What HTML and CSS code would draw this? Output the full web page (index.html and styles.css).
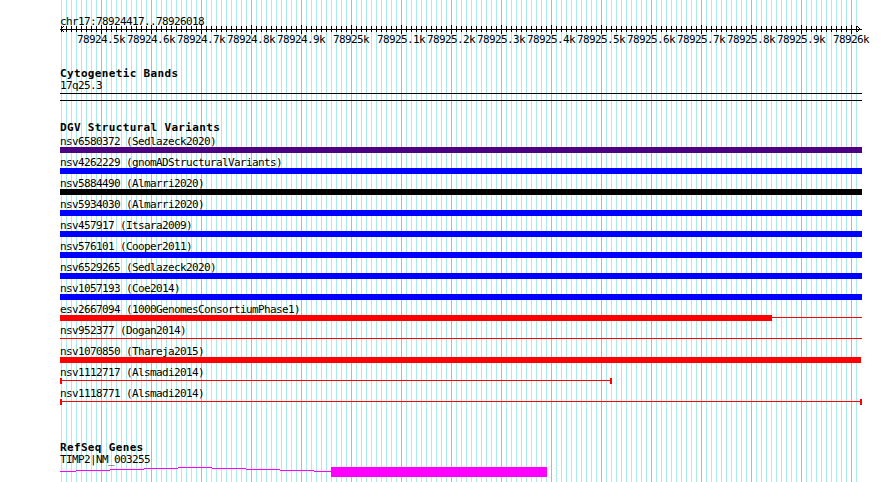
FILE: index.html
```html
<!DOCTYPE html>
<html>
<head>
    <meta charset="utf-8">
    <title>chr17:78924417..78926018</title>
    <link rel="stylesheet" href="styles.css">
</head>
<body>

<div class="browser">

    <div class="ruler">
        <div class="pos">chr17:78924417..78926018</div>
        <svg class="axis" width="802" height="18" shape-rendering="crispEdges">
            <defs>
                <pattern id="minor" patternUnits="userSpaceOnUse" width="5" height="6">
                    <rect x="1" y="0" width="1" height="6" fill="#000"/>
                </pattern>
                <pattern id="major" patternUnits="userSpaceOnUse" x="0" y="-2" width="50" height="9">
                    <rect x="41" y="0" width="1" height="9" fill="#000"/>
                </pattern>
            </defs>
            <rect x="0" y="2" width="802" height="1" fill="#000"/>
            <rect x="0" y="-1" width="797" height="6" fill="url(#minor)"/>
            <rect x="0" y="-2" width="797" height="9" fill="url(#major)"/>
            <polyline points="4,-1 1,2 4,5" fill="none" stroke="#000" stroke-width="1"/>
            <polyline points="797,-1 800,2 797,5" fill="none" stroke="#000" stroke-width="1"/>
            <text x="41" y="16">78924.5k</text>
            <text x="91" y="16">78924.6k</text>
            <text x="141" y="16">78924.7k</text>
            <text x="191" y="16">78924.8k</text>
            <text x="241" y="16">78924.9k</text>
            <text x="291" y="16">78925k</text>
            <text x="341" y="16">78925.1k</text>
            <text x="391" y="16">78925.2k</text>
            <text x="441" y="16">78925.3k</text>
            <text x="491" y="16">78925.4k</text>
            <text x="541" y="16">78925.5k</text>
            <text x="591" y="16">78925.6k</text>
            <text x="641" y="16">78925.7k</text>
            <text x="691" y="16">78925.8k</text>
            <text x="741" y="16">78925.9k</text>
            <text x="791" y="16">78926k</text>
        </svg>
    </div>

    <div class="track cyto">
        <div class="track-title">Cytogenetic Bands</div>
        <div class="item-label">17q25.3</div>
        <div class="band"></div>
    </div>

    <div class="track dgv">
        <div class="track-title">DGV Structural Variants</div>
        <div class="sv-list">
            <div class="sv">
                <div class="item-label">nsv6580372 (Sedlazeck2020)</div>
                <div class="sv-bar"><div class="block purple" style="width: 802px"></div></div>
            </div>
            <div class="sv">
                <div class="item-label">nsv4262229 (gnomADStructuralVariants)</div>
                <div class="sv-bar"><div class="block blue" style="width: 802px"></div></div>
            </div>
            <div class="sv">
                <div class="item-label">nsv5884490 (Almarri2020)</div>
                <div class="sv-bar"><div class="block black" style="width: 802px"></div></div>
            </div>
            <div class="sv">
                <div class="item-label">nsv5934030 (Almarri2020)</div>
                <div class="sv-bar"><div class="block blue" style="width: 802px"></div></div>
            </div>
            <div class="sv">
                <div class="item-label">nsv457917 (Itsara2009)</div>
                <div class="sv-bar"><div class="block blue" style="width: 802px"></div></div>
            </div>
            <div class="sv">
                <div class="item-label">nsv576101 (Cooper2011)</div>
                <div class="sv-bar"><div class="block blue" style="width: 802px"></div></div>
            </div>
            <div class="sv">
                <div class="item-label">nsv6529265 (Sedlazeck2020)</div>
                <div class="sv-bar"><div class="block blue" style="width: 802px"></div></div>
            </div>
            <div class="sv">
                <div class="item-label">nsv1057193 (Coe2014)</div>
                <div class="sv-bar"><div class="block blue" style="width: 802px"></div></div>
            </div>
            <div class="sv">
                <div class="item-label">esv2667094 (1000GenomesConsortiumPhase1)</div>
                <div class="sv-bar">
                    <div class="block red" style="width: 712px"></div>
                    <div class="line red" style="width: 90px"></div>
                </div>
            </div>
            <div class="sv">
                <div class="item-label">nsv952377 (Dogan2014)</div>
                <div class="sv-bar"><div class="line red" style="width: 802px"></div></div>
            </div>
            <div class="sv">
                <div class="item-label">nsv1070850 (Thareja2015)</div>
                <div class="sv-bar"><div class="block red" style="width: 801px"></div></div>
            </div>
            <div class="sv">
                <div class="item-label">nsv1112717 (Alsmadi2014)</div>
                <div class="sv-bar">
                    <div class="cap red"></div>
                    <div class="line red" style="width: 548px"></div>
                    <div class="cap red"></div>
                </div>
            </div>
            <div class="sv">
                <div class="item-label">nsv1118771 (Alsmadi2014)</div>
                <div class="sv-bar">
                    <div class="cap red"></div>
                    <div class="line red" style="width: 798px"></div>
                    <div class="cap red"></div>
                </div>
            </div>
        </div>
    </div>

    <div class="track refseq">
        <div class="track-title">RefSeq Genes</div>
        <div class="item-label">TIMP2|NM_003255</div>
        <svg class="gene" width="802" height="10" shape-rendering="crispEdges">
            <g fill="#f0f">
                <rect x="0" y="4" width="16" height="1"/>
                <rect x="16" y="3" width="34" height="1"/>
                <rect x="50" y="2" width="34" height="1"/>
                <rect x="84" y="1" width="34" height="1"/>
                <rect x="118" y="0" width="34" height="1"/>
                <rect x="152" y="1" width="34" height="1"/>
                <rect x="186" y="2" width="34" height="1"/>
                <rect x="220" y="3" width="34" height="1"/>
                <rect x="254" y="4" width="17" height="1"/>
                <rect x="271" y="0" width="216" height="10"/>
            </g>
        </svg>
    </div>

</div>

</body>
</html>
```

FILE: styles.css
```css
body {margin: 0; background: #fff; color: #000;}
body {font-family: "DejaVu Sans Mono", "Liberation Mono", monospace;}
body {font-size: 11px; line-height: 11px; letter-spacing: -0.62px;}

.browser {margin-left: 60px; width: 802px; min-height: 482px;}
.browser {background-image:
    repeating-linear-gradient(to right, transparent 0 41px, #97bfe3 41px 42px, transparent 42px 50px),
    repeating-linear-gradient(to right, transparent 0 1px, #aaeaea 1px 2px, transparent 2px 5px);
    background-size: 797px 100%; background-repeat: no-repeat;}

.pos {padding-top: 16px; height: 11px;}
.axis {display: block; overflow: visible;}
.axis text {font-family: "DejaVu Sans Mono", "Liberation Mono", monospace; font-size: 11px;
    letter-spacing: -0.62px; text-anchor: middle; fill: #000;}

.track-title {font-weight: bold; letter-spacing: 0.34px; height: 11px; white-space: nowrap;}
.item-label {height: 11px; white-space: nowrap;}

.cyto {margin-top: 23px;}
.cyto .item-label {margin-top: 1px;}
.band {margin-top: 2px; height: 6px; border-top: 1px solid #000; border-bottom: 1px solid #000;}

.dgv {margin-top: 21px;}
.sv-list {margin-top: 3px;}
.sv {padding-bottom: 4px;}
.sv-bar {display: flex; align-items: flex-start; height: 6px;}
.sv-bar .block {height: 6px;}
.sv-bar .line {height: 1px; margin-top: 2px;}
.sv-bar .cap {width: 2px; height: 6px;}

.purple {background: #4d0082;}
.blue {background: #00f;}
.black {background: #000;}
.red {background: #f00;}

.refseq {margin-top: 33px;}
.refseq .item-label {margin-top: 1px; height: 12px;}
.gene {display: block; margin-top: 1px;}
```
